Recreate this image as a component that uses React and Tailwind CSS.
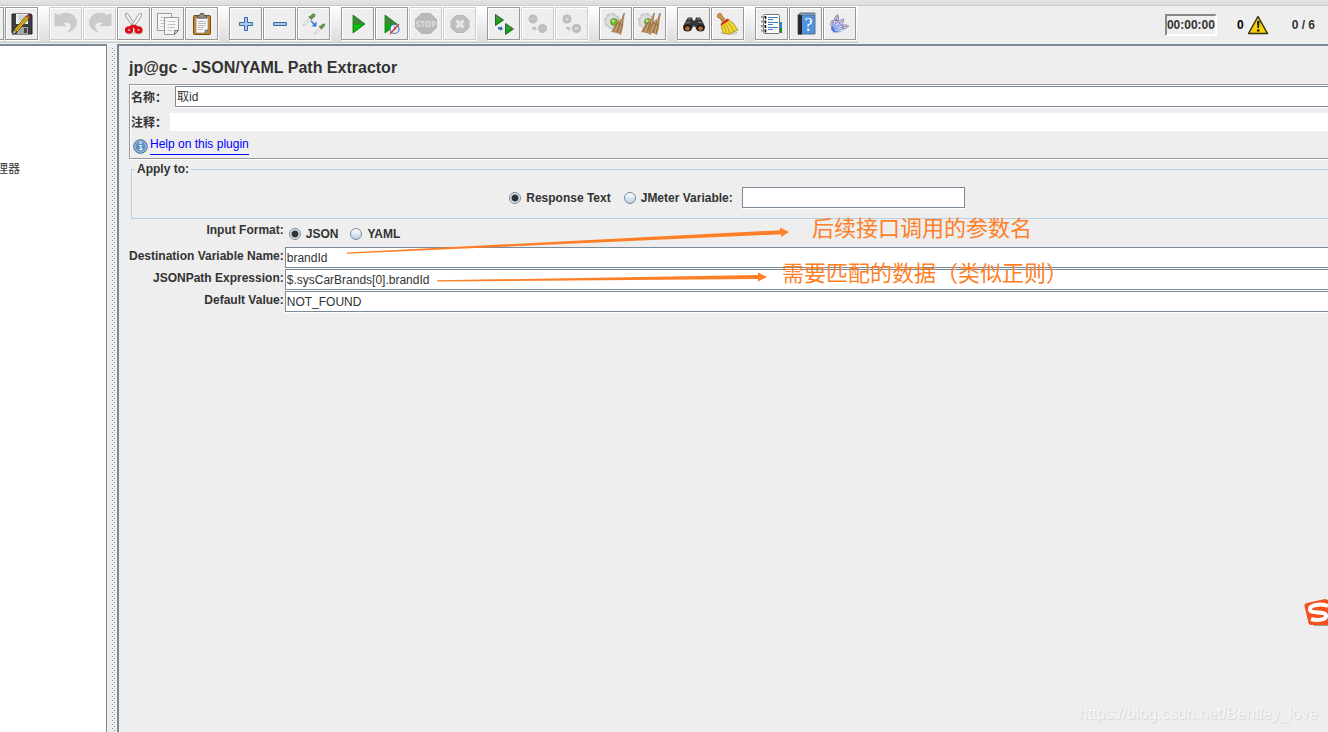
import React from "react";
import clsx from "clsx";

const Sheet = ({ x, y }) => (
  <g>
    <path d={`M${x} ${y}h14v13l-4 4h-10z`} fill="#f6f6f6" stroke="#9a9a9a" />
    <path d={`M${x + 3} ${y + 4}h8M${x + 3} ${y + 7}h8M${x + 3} ${y + 10}h7M${x + 3} ${y + 13}h5`} stroke="#c4c4c4" />
    <path d={`M${x + 14} ${y + 13}h-4v4z`} fill="#ccc" stroke="#777" />
  </g>
);

const Gear = () => (
  <g>
    <circle cx="13" cy="14" r="6.5" fill="#dedede" stroke="#c2c2c2" />
    <circle cx="13" cy="14" r="7.2" fill="none" stroke="#cacaca" strokeWidth="2" strokeDasharray="3.6 2" />
    <circle cx="15" cy="15" r="3.4" fill="#6cc022" stroke="#4b7d1c" strokeWidth="0.7" />
    <circle cx="14.2" cy="14" r="1.4" fill="#c0f07c" />
  </g>
);

const Whisk = ({ x }) => (
  <g transform={`translate(${x} 0)`}>
    <path d="M24.500 6h1.500L24 16h-3z" fill="#a8835c" />
    <path d="M21 12l3.500 2-.5 6-2 8-4-2-6-1 4-7z" fill="#b38d5f" />
    <path d="M20 14l-6 10M22 14l-4 12M23.500 15l-2.500 11" stroke="#8b6238" strokeWidth="0.8" />
    <path d="M21 13l-5 11M23 14l-3 12" stroke="#d6b486" strokeWidth="0.7" />
    <path d="M18 16l5.500 2" stroke="#99683f" strokeWidth="0.8" />
  </g>
);

const Dropper = ({ x, y, s }) => (
  <g transform={`translate(${x} ${y}) scale(${s})`}>
    <path d="M1 10L7 4l1.500 1.500L3 11l-3 1z" fill="#f8f8f8" stroke="#b9bdb5" strokeWidth="0.9" />
    <path d="M6 2.500L9.500 6" stroke="#666" strokeWidth="1.200" />
    <path d="M7 3l3-3 2.500 0 0 2.500L9.500 5z" fill="#5f9e46" stroke="#48763a" strokeWidth="0.6" />
  </g>
);

const Plume = ({ angle, length }) => (
  <g transform={`translate(11 22) rotate(${angle})`}>
    <path d={`M0 2C-3-3-3-${length - 3} 0-${length} 3-${length - 3} 3-3 0 2z`} fill="#d5e2fc" stroke="#6384d8" strokeWidth="0.8" />
    <path d={`M0 1V-${length - 2}`} stroke="#5174d4" strokeWidth="0.7" />
    <path d={`M-1-${length - 2}h2`} stroke="#f09a3a" strokeWidth="1.800" />
    <path d={`M-2-${length - 6}h4`} stroke="#d2405c" strokeWidth="0.9" />
  </g>
);

const OCTAGON = "M12.500 6.500h9l6 6v8l-6 6h-9l-6-6v-8z";

const icons = {
  save: (
    <g>
      <path d="M7 7h19l1 1v19H8l-1-1z" fill="#3e3e42" stroke="#242424" />
      <path d="M11 7h12v10H11z" fill="#edf0f5" />
      <path d="M13 9h8M13 11h8M13 13h7" stroke="#b4bac4" />
      <path d="M12 20h11v7H12z" fill="#a5a5a5" />
      <path d="M19 21h3v5h-3z" fill="#44464a" />
      <path d="M21 9l3 2L12 25l-3-2z" fill="#f5c322" stroke="#49390d" strokeWidth="0.8" />
      <path d="M22 10.500L10.500 24" stroke="#a36c00" />
      <path d="M21 9l1-1.500 3 2L24 11z" fill="#d33" />
      <path d="M9 23l3 2-5 2.500z" fill="#e8c894" stroke="#333" strokeWidth="0.6" />
    </g>
  ),
  undo: (
    <path d="M6 6.500l3.500 2C14 5 24 5 27 12c2 6-1 11-8 13 4-4 4-8 0-9.500-2-.7-4 0-5 1l3 2.500-11-.5z" fill="#cbcbcb" stroke="#c2c2c2" strokeWidth="0.6" />
  ),
  redo: (
    <path d="M28 6.500l-3.500 2C20 5 10 5 7 12c-2 6 1 11 8 13-4-4-4-8 0-9.500 2-.7 4 0 5 1L17 19l11-.5z" fill="#cbcbcb" stroke="#c2c2c2" strokeWidth="0.6" />
  ),
  cut: (
    <g fill="none">
      <ellipse cx="17" cy="26" rx="8" ry="1.500" fill="#d3d3d3" />
      <path d="M8.500 6.500c2-.5 3 .5 3.500 2L19 19l-2 2L9 10z" fill="#eee" stroke="#9a9a9a" />
      <path d="M24.500 6.500c-2-.5-3 .5-3.500 2L14 19l2 2 8-11z" fill="#f7f7f7" stroke="#9a9a9a" />
      <path d="M13 18.500l3.500-1 3.500 1 1 2-3 2-1.500-2-1.500 2-3-2z" fill="#d11116" />
      <ellipse cx="12" cy="23" rx="2.600" ry="2.300" stroke="#d60f16" strokeWidth="3" />
      <ellipse cx="21.500" cy="23" rx="2.600" ry="2.300" stroke="#d60f16" strokeWidth="3" />
    </g>
  ),
  copy: (
    <g fill="none">
      <Sheet x={6.5} y={6.5} />
      <Sheet x={13.5} y={10.5} />
    </g>
  ),
  paste: (
    <g fill="none">
      <rect x="8.500" y="8.500" width="17" height="19" rx="1" fill="#c4852a" stroke="#77490d" />
      <path d="M11 11h12v12l-3 3h-9z" fill="#f7f7f7" stroke="#8d8d8d" strokeWidth="0.7" />
      <path d="M13 14.500h8M13 16.500h8M13 18.500h8M13 20.500h6M13 22.500h5" stroke="#bcbcbc" />
      <path d="M23 23h-3v3z" fill="#aaa" stroke="#666" strokeWidth="0.7" />
      <path d="M12.500 11V8.500h2l1-2h3l1 2h2V11z" fill="#8e9189" stroke="#565850" />
    </g>
  ),
  plus: (
    <path d="M15.500 10.500h3v5h5v3h-5v5h-3v-5h-5v-3h5z" fill="#a9caeb" stroke="#3465a4" />
  ),
  minus: <rect x="10.500" y="15.500" width="13" height="3" rx="0.5" fill="#a9caeb" stroke="#3465a4" />,
  toggle: (
    <g>
      <Dropper x={6} y={7} s={0.95} />
      <Dropper x={17} y={17} s={0.85} />
      <path d="M14 14l4 4" stroke="#2f75d8" strokeWidth="1.600" />
      <path d="M19.500 14.500v5h-5z" fill="#2f75d8" />
    </g>
  ),
  run: (
    <g>
      <path d="M12 8l12 9-12 9z" fill="#07a807" stroke="#12741a" strokeWidth="0.8" />
      <path d="M12.500 9l10 8h-10z" fill="#45833f" />
      <path d="M13 24v-6h8z" fill="#09c909" />
    </g>
  ),
  runNoPause: (
    <g>
      <path d="M10 8l12 9-12 9z" fill="#07a807" stroke="#12741a" strokeWidth="0.8" />
      <path d="M10.500 9l10 8h-10z" fill="#45833f" />
      <circle cx="19.500" cy="22" r="4.500" fill="#e7f0fa" stroke="#3f75b6" strokeWidth="1.200" />
      <path d="M19.500 19v3h2" stroke="#8899aa" fill="none" />
      <path d="M15 27l9-10" stroke="#dc2727" strokeWidth="1.300" />
    </g>
  ),
  stop: (
    <g>
      <path d={OCTAGON} fill="#bababa" stroke="#b3b3b3" />
      <text x="17" y="20" textAnchor="middle" fontSize="8" fontWeight="bold" fill="#dedede" fontFamily="Open Sans">
        STOP
      </text>
    </g>
  ),
  shutdown: (
    <g>
      <path d="M13 8.500h8l5 5v7l-5 5h-8l-5-5v-7z" fill="#bfbfbf" stroke="#b5b5b5" />
      <path d="M13.500 13.500l7 7M20.500 13.500l-7 7" stroke="#e8e8e8" strokeWidth="3" />
    </g>
  ),
  remoteRun: (
    <g>
      <path d="M8.500 7.500l8 5.500-8 5.500z" fill="#0ba30e" stroke="#28662b" />
      <path d="M18.500 16.500l8 5.500-8 5.500z" fill="#0ba30e" stroke="#28662b" />
      <path d="M9 8.500l6 4.500H9zM19 17.500l6 4.500h-6z" fill="#4a8e46" />
      <path d="M11 20h3v-1l2 3-3 2v-1.500h-2z" fill="#3c70ba" />
    </g>
  ),
  remoteStop: (
    <g>
      <circle cx="12" cy="12" r="4.500" fill="#bdbdbd" />
      <circle cx="21.500" cy="21.500" r="4.500" fill="#bdbdbd" />
      <path d="M9 12h6M18.500 21.500h6" stroke="#cccccc" strokeWidth="2" strokeDasharray="1 0.5" />
      <path d="M11 20h3v-1l2 3-3 2v-1.500h-2z" fill="#c4c4c4" />
    </g>
  ),
  remoteShutdown: (
    <g>
      <circle cx="12" cy="12" r="4.500" fill="#bbb" />
      <circle cx="21.500" cy="21.500" r="4.500" fill="#bbb" />
      <path d="M10.500 10.500l3 3m0-3l-3 3M20 20l3 3m0-3l-3 3" stroke="#dedede" strokeWidth="1.400" />
      <path d="M11 20h3v-1l2 3-3 2v-1.500h-2z" fill="#c4c4c4" />
    </g>
  ),
  clear: (
    <g>
      <Gear />
      <Whisk x={0} />
    </g>
  ),
  clearAll: (
    <g>
      <Gear />
      <Whisk x={-4} />
      <Whisk x={2} />
    </g>
  ),
  search: (
    <g>
      <path d="M11 10.500h4l1 3h2l1-3h4l2 3 3 6-1 4h-7l-2-4h-2l-2 4H7l-1-4 3-6z" fill="#37373a" />
      <path d="M11 12h3M20 12h3M9 16l4-1M21 15l4 1" stroke="#8b8b90" />
      <ellipse cx="10.500" cy="21" rx="4" ry="3.500" fill="#171717" />
      <ellipse cx="23.500" cy="21" rx="4" ry="3.500" fill="#171717" />
      <ellipse cx="10.500" cy="21.500" rx="2.500" ry="2.200" fill="#b5662b" />
      <ellipse cx="23.500" cy="21.500" rx="2.500" ry="2.200" fill="#b5662b" />
    </g>
  ),
  searchReset: (
    <g>
      <ellipse cx="18" cy="26" rx="9" ry="1.800" fill="#cfcfcf" />
      <path d="M7 7c2-1.500 4 0 4 2l4 5-3 2-3-5C6 11 6 9 7 7z" fill="#d19a45" stroke="#8a5b14" strokeWidth="0.8" />
      <path d="M17 12l5 4 5 7-5 2-3 2-7-1-2-8z" fill="#f1d535" stroke="#a5850e" strokeWidth="0.8" />
      <path d="M13 18l2 7M15 17l4 9M17 15l6 9" stroke="#b8991a" strokeWidth="0.8" />
      <path d="M9.500 17l7-5.500 1.500 2-7.500 5z" fill="#d4271c" />
    </g>
  ),
  functions: (
    <g fill="none">
      <path d="M23 15h4v6h-4z" fill="#2c83dd" />
      <path d="M23 21h4v5h-4z" fill="#149126" />
      <rect x="8.500" y="7.500" width="16" height="19" rx="1" fill="#fcfcfc" stroke="#777" />
      <path d="M13 10.500h10M13 12.500h5M13 15.500h10M13 17.500h5M13 20.500h10M13 22.500h5" stroke="#3f7cbd" />
      <path d="M6 10h5M6 14.500h5M6 19h5M6 23.500h5" stroke="#999" strokeWidth="2" />
      <path d="M10.500 9v3M10.500 13.500v3M10.500 18v3M10.500 22.500v3" stroke="#111" strokeWidth="1.500" />
    </g>
  ),
  help: (
    <g>
      <path d="M9 8l2-2h15v21H9z" fill="#3f7fcb" stroke="#4a5968" strokeWidth="0.8" />
      <path d="M9 8h4v19.500H9z" fill="#25292e" />
      <path d="M10 7.500l1-1h15v1.500H10z" fill="#8f9a9a" />
      <path d="M13 9h12.500v17.500H13z" fill="#5592dc" />
      <text x="19.500" y="24" textAnchor="middle" fontSize="18" fill="#fff" fontFamily="Liberation Serif">
        ?
      </text>
    </g>
  ),
  feather: (
    <g>
      <Plume angle={-12} length={9} />
      <Plume angle={14} length={15} />
      <Plume angle={45} length={14} />
      <Plume angle={78} length={15} />
      <path d="M9 19l3 5 8 1-9 .5-3-3z" fill="#5174d4" />
    </g>
  ),
};

const toolbarGroups = [
  [["undo", "Undo", true], ["redo", "Redo", true], ["cut", "Cut"], ["copy", "Copy"], ["paste", "Paste"]],
  [["plus", "Expand all"], ["minus", "Collapse all"], ["toggle", "Toggle"]],
  [["run", "Start"], ["runNoPause", "Start no pauses"], ["stop", "Stop", true], ["shutdown", "Shutdown", true]],
  [["remoteRun", "Remote start all"], ["remoteStop", "Remote stop all", true], ["remoteShutdown", "Remote shutdown all", true]],
  [["clear", "Clear"], ["clearAll", "Clear all"]],
  [["search", "Search"], ["searchReset", "Reset search"]],
  [["functions", "Function helper"], ["help", "Help"], ["feather", "Templates"]],
];

function ToolButton({ icon, label, disabled }) {
  return (
    <button
      type="button"
      aria-label={label}
      disabled={disabled}
      className={clsx(
        "h-[33px] w-[33px] shrink-0 border bg-[#eeeeee] shadow-[inset_1px_1px_#ffffff,1px_1px_#ffffff]",
        disabled ? "border-[#cccccc]" : "border-[#999999]"
      )}
    >
      <svg viewBox="1 1 31 31" width="31" height="31" fill="none" aria-hidden="true">
        {icons[icon]}
      </svg>
    </button>
  );
}

function Toolbar() {
  return (
    <header className="flex h-[38px] shrink-0 items-center justify-between border-t border-[#cccccc] pr-[13px]">
      <div className="flex h-full gap-[11px] border-b border-[#cccccc] bg-linear-to-b from-white to-[#dddddd] pt-px pr-0.5">
        <div className="flex gap-px">
          {/* previous button, cut off by the window edge */}
          <div className="flex w-1 justify-end overflow-hidden">
            <ToolButton icon="plus" label="Open" />
          </div>
          <ToolButton icon="save" label="Save" />
        </div>
        {toolbarGroups.map((group, index) => (
          <div key={index} className="flex gap-px">
            {group.map(([icon, label, disabled]) => (
              <ToolButton key={icon} icon={icon} label={label} disabled={disabled} />
            ))}
          </div>
        ))}
      </div>

      <div className="flex items-center font-bold">
        <div className="border-2 border-t-[#888888] border-r-white border-b-white border-l-[#888888] py-px leading-4">
          00:00:00
        </div>
        <div className="ml-5 flex items-center gap-[3px] text-black">
          0
          <svg viewBox="0 0 22 20" width="22" height="20" aria-hidden="true">
            <path d="M11 1.500L20.500 18.500h-19z" fill="#f7cf0a" stroke="#35310f" strokeWidth="1.500" strokeLinejoin="round" />
            <path d="M10 6h2.500l-.5 7h-1.500z" fill="#1c1a06" />
            <circle cx="11.200" cy="15.500" r="1.300" fill="#1c1a06" />
          </svg>
        </div>
        <div className="ml-[23px]">0 / 6</div>
      </div>
    </header>
  );
}

function Divider() {
  return (
    <div className="w-[10px] shrink-0 bg-[#eeeeee] pt-1 pl-[5px]">
      <svg width="4" height="100%" aria-hidden="true">
        <defs>
          <pattern id="grip" width="4" height="4" patternUnits="userSpaceOnUse">
            <rect x="0" y="0" width="1" height="1" fill="#7a8a99" />
            <rect x="1" y="1" width="1" height="1" fill="#ffffff" />
            <rect x="2" y="2" width="1" height="1" fill="#7a8a99" />
            <rect x="3" y="3" width="1" height="1" fill="#ffffff" />
          </pattern>
        </defs>
        <rect width="4" height="100%" fill="url(#grip)" />
      </svg>
    </div>
  );
}

function TextField({ className, ...props }) {
  return (
    <input
      type="text"
      className={clsx(
        "h-[21px] min-w-0 border border-[#7a8a99] bg-white px-px shadow-[0_1px_#ffffff] outline-none",
        className
      )}
      {...props}
    />
  );
}

function Radio({ id, name, label, defaultChecked }) {
  return (
    <div className="flex items-center gap-[5px]">
      <input
        id={id}
        name={name}
        type="radio"
        defaultChecked={defaultChecked}
        className="h-3 w-3 appearance-none rounded-full border border-[#7a8a99] bg-linear-to-b from-white to-[#b8cfe5] checked:bg-[radial-gradient(circle,#333333_0_3px,#dde8f3_4px)]"
      />
      <label htmlFor={id} className="font-bold">
        {label}
      </label>
    </div>
  );
}

const fields = [
  { id: "variable", label: "Destination Variable Name:", value: "brandId" },
  { id: "expression", label: "JSONPath Expression:", value: "$.sysCarBrands[0].brandId" },
  { id: "fallback", label: "Default Value:", value: "NOT_FOUND" },
];

function ExtractorPanel() {
  return (
    <main className="min-w-0 flex-1 overflow-hidden border-t-2 border-l-2 border-[#7a8a99] pt-2 pl-[10px]">
      <h1 className="pt-[2px] pb-1 text-base leading-6 font-bold">jp@gc - JSON/YAML Path Extractor</h1>

      <section className="-mr-3 border border-[#999999] p-px shadow-[inset_1px_1px_#ffffff,0_1px_#ffffff]">
        <div className="flex h-[22px] items-start">
          <label htmlFor="name" className="w-11 shrink-0 leading-6 font-bold">
            名称：
          </label>
          <TextField id="name" defaultValue="取id" className="flex-1 pb-[2px]" />
        </div>
        <div className="mt-[5px] flex h-[18px] items-start">
          <label htmlFor="comment" className="w-[39px] shrink-0 leading-5 font-bold">
            注释：
          </label>
          <input id="comment" type="text" className="h-full min-w-0 flex-1 bg-white outline-none" />
        </div>
        <div className="mt-1 flex h-[22px] items-start gap-[2px] pl-[2px]">
          <svg viewBox="0 0 15 15" width="15" height="15" className="mt-1" aria-hidden="true">
            <circle cx="7.500" cy="7.500" r="6.800" fill="#5c8fc6" stroke="#4a6d96" />
            <circle cx="7.500" cy="7.500" r="5.600" fill="#5f90c6" stroke="#b5cfea" />
            <path d="M6 6.500h2v4h1M6 10.500h3.500" stroke="#fff" strokeWidth="1.200" fill="none" />
            <circle cx="7.500" cy="4" r="1.100" fill="#fff" />
          </svg>
          <a href="#help" className="border-b border-[#0000ff] pb-px leading-[18px] text-[#0000ff]">
            Help on this plugin
          </a>
        </div>
      </section>

      <fieldset className="mt-[2px] -mr-3 ml-[2px] border border-[#b8cfe5] pb-[10px] pl-[3px]">
        <legend className="px-[2px] leading-4 font-bold">Apply to:</legend>
        <div className="mt-[10px] flex items-center justify-center">
          <Radio id="response" name="source" label="Response Text" defaultChecked />
          <div className="ml-[13px]">
            <Radio id="jmeter" name="source" label="JMeter Variable:" />
          </div>
          <TextField aria-label="JMeter Variable name" className="ml-[9px] w-[223px]" />
        </div>
      </fieldset>

      <form className="-mr-3 grid grid-cols-[auto_1fr] gap-x-px">
        <div className="pt-[2px] text-right leading-[18px] font-bold">Input Format:</div>
        <div className="flex h-7 items-center gap-3 pt-[2px] pl-1">
          <Radio id="json" name="format" label="JSON" defaultChecked />
          <Radio id="yaml" name="format" label="YAML" />
        </div>
        {fields.map((field) => (
          <React.Fragment key={field.id}>
            <label htmlFor={field.id} className="text-right leading-[18px] font-bold">
              {field.label}
            </label>
            <div className="flex h-[22px] items-start">
              <TextField id={field.id} defaultValue={field.value} className="flex-1" />
            </div>
          </React.Fragment>
        ))}
      </form>
    </main>
  );
}

function Annotations() {
  return (
    <div className="pointer-events-none absolute inset-0 overflow-hidden text-[22px] leading-7 text-[#ff7f27]">
      <svg className="absolute top-0 left-0" width="800" height="300" fill="#ff7f27" aria-hidden="true">
        <path d="M347 252.500L780 230.200V227.500l9 4.500-8 5v-2.700L347 253.800z" />
        <path d="M437 280.300L758 275v-2.500l9 4.500-9 4.500v-2.500L437 281.600z" />
      </svg>
      <p className="absolute top-[215px] left-[812px] whitespace-nowrap">后续接口调用的参数名</p>
      <p className="absolute top-[260px] left-[782px] whitespace-nowrap">需要匹配的数据（类似正则）</p>
    </div>
  );
}

export default function App() {
  return (
    <div className="relative flex h-screen flex-col overflow-hidden bg-[#eeeeee] font-['Liberation_Sans','Noto_Sans_CJK_SC',sans-serif] text-xs text-[#333333]">
      <div className="h-[5px] shrink-0 bg-linear-to-b from-[#e4e4e4] to-[#dddddd]" />
      <Toolbar />
      <div className="mt-px flex min-h-0 flex-1">
        <nav className="w-[107px] shrink-0 overflow-hidden border-t-2 border-r border-[#7a8a99] bg-white pt-[115px]">
          <div className="-ml-1 leading-4 whitespace-nowrap">理器</div>
        </nav>
        <Divider />
        <ExtractorPanel />
      </div>

      <Annotations />

      <svg className="absolute top-[599px] right-0" width="24" height="28" aria-hidden="true">
        <path d="M10 26.500h14" stroke="#999" />
        <path d="M3 4L21 0l3 1v25H7c-1 0-2-1-2.500-2L.5 7C0 5.500 1 4.500 3 4z" fill="#f4511e" />
        <path d="M24 7C16 4 5 6 6 11c1 4 15 1 16 5 1 5-9 6-15 4" fill="none" stroke="#fff" strokeWidth="4" />
      </svg>
      <p className="absolute right-[10px] bottom-[6px] text-base leading-6 text-[#f6f6f6] [text-shadow:1px_1px_1px_#d4d4d4]">
        https://blog.csdn.net/Bentley_love
      </p>
    </div>
  );
}
